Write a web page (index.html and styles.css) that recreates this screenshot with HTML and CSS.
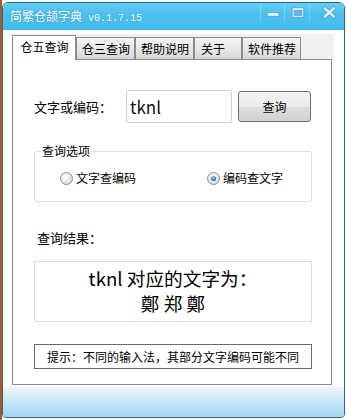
FILE: index.html
```html
<!DOCTYPE html>
<html lang="zh-CN">
<head>
    <meta charset="UTF-8">
    <meta name="viewport" content="width=device-width, initial-scale=1.0">
    <title>简繁仓颉字典</title>
    <link rel="stylesheet" href="styles.css">
</head>
<body>
    <div class="window">
        <div class="titlebar">
            <span class="title">简繁仓颉字典<span class="version">v0.1.7.15</span></span>
            <div class="controls">
                <span class="ctl ctl-min">
                    <svg width="24" height="19" viewBox="0 0 24 19">
                        <rect x="6.5" y="9.5" width="12" height="4" fill="#e2f2fb" stroke="#3f89b8" stroke-opacity="0.6"/>
                    </svg>
                </span>
                <span class="ctl ctl-max">
                    <svg width="25" height="19" viewBox="0 0 25 19">
                        <rect x="7.5" y="4.5" width="12" height="10" fill="#e2f2fb" stroke="#3f89b8" stroke-opacity="0.6"/>
                        <rect x="9.5" y="7.5" width="8" height="5" fill="#4cc1ee" stroke="#3f89b8" stroke-opacity="0.6"/>
                    </svg>
                </span>
                <span class="ctl ctl-close">
                    <svg width="33" height="19" viewBox="0 0 33 19">
                        <path d="M15.5 5.5 L24.5 13.5 M24.5 5.5 L15.5 13.5" stroke="#3f89b8" stroke-opacity="0.6" stroke-width="4.5" stroke-linecap="square"/>
                        <path d="M15.5 5.5 L24.5 13.5 M24.5 5.5 L15.5 13.5" stroke="#e2f2fb" stroke-width="2.6" stroke-linecap="square"/>
                    </svg>
                </span>
            </div>
        </div>

        <div class="client">
            <div class="tabs">
                <div class="tabstrip">
                    <span class="tab tab-active">仓五查询</span>
                    <span class="tab">仓三查询</span>
                    <span class="tab">帮助说明</span>
                    <span class="tab tab-about">关于</span>
                    <span class="tab">软件推荐</span>
                </div>

                <div class="page">
                    <div class="query-row">
                        <label class="field-label" for="code">文字或编码：</label>
                        <input id="code" class="code-input" type="text" value="tknl">
                        <button class="query-btn">查询</button>
                    </div>

                    <fieldset class="options">
                        <legend>查询选项</legend>
                        <div class="radio-row">
                            <label class="radio"><span class="radio-dot"></span>文字查编码</label>
                            <label class="radio"><span class="radio-dot checked"></span>编码查文字</label>
                        </div>
                    </fieldset>

                    <div class="result-label">查询结果：</div>
                    <div class="result-box">
                        <div>tknl 对应的文字为：</div>
                        <div>鄭 郑 鄭</div>
                    </div>

                    <div class="tip">提示：不同的输入法，其部分文字编码可能不同</div>
                </div>
            </div>
        </div>

        <div class="statusbar"></div>
    </div>
</body>
</html>
```

FILE: styles.css
```css
* {
    box-sizing: border-box;
}

body {
    margin: 0;
    background: linear-gradient(to right, #a35b2c 0 2px, #ffffff 2px);
    font-family: "Noto Sans CJK SC", "Noto Sans", sans-serif;
    font-size: 12px;
    color: #000;
}

.window {
    margin: 2px 0 0 2px;
    width: 343px;
    height: 416px;
    border: 1px solid #2b6690;
    border-radius: 6px 6px 4px 4px;
    overflow: hidden;
    display: flex;
    flex-direction: column;
    background: #fff;
}

/* title bar */
.titlebar {
    height: 27px;
    flex: none;
    display: flex;
    align-items: flex-start;
    background: linear-gradient(#66cff4, #4cc1ee 40%, #45bced);
    color: #fff;
}

.title {
    padding: 5px 0 0 7px;
    line-height: 16px;
    font-size: 12px;
    text-shadow: 0 0 2px rgba(0, 70, 120, 0.45);
}

.version {
    font-family: "Liberation Mono", monospace;
    font-size: 10px;
    margin-left: 6px;
}

.controls {
    margin-left: auto;
    margin-right: 2px;
    display: flex;
    height: 19px;
}

.ctl {
    display: flex;
    border-left: 1px solid rgba(255, 255, 255, 0.22);
}

.ctl-min { width: 24px; }
.ctl-max { width: 25px; }
.ctl-close { width: 33px; }

/* client */
.client {
    flex: 1;
    padding: 4px 0 0 9px;
}

.tabs {
    width: 322px;
}

.tabstrip {
    display: flex;
    align-items: flex-end;
    height: 25px;
    background: #f0f0f0;
}

.tab {
    height: 22px;
    padding: 0 4px 0 5px;
    border: 1px solid #898c95;
    border-bottom: 0;
    background: linear-gradient(#f4f4f4, #e7e7e7 50%, #d7d7d7);
    line-height: 21px;
    white-space: nowrap;
}

.tab-active {
    position: relative;
    width: 64px;
    height: 25px;
    margin-bottom: -1px;
    background: #fff;
    text-align: center;
    line-height: 22px;
}

.tab-about {
    width: 48px;
    padding-left: 6px;
}

.page {
    width: 320px;
    height: 326px;
    border: 1px solid #898c95;
    background: #fff;
    padding-left: 21px;
}

.query-row {
    display: flex;
    align-items: center;
    margin-top: 30px;
    height: 33px;
}

.field-label {
    width: 92px;
    font-size: 13px;
}

.code-input {
    width: 106px;
    height: 33px;
    border: 1px solid #c9d0d8;
    border-radius: 2px;
    padding: 0 0 0 3px;
    font-family: "Noto Sans CJK SC", "Noto Sans", sans-serif;
    font-size: 17px;
    color: #111;
    outline: none;
}

.query-btn {
    margin-left: 6px;
    width: 73px;
    height: 31px;
    border: 1px solid #707070;
    border-radius: 3px;
    background: linear-gradient(#f3f3f3, #ebebeb 50%, #dedede 50%, #d2d2d2);
    font-family: "Noto Sans CJK SC", "Noto Sans", sans-serif;
    font-size: 12px;
    color: #000;
    padding: 0;
}

.options {
    margin: 21px 0 0 0;
    width: 278px;
    border: 1px solid #d5dfe5;
    border-radius: 3px;
    padding: 13px 0 16px 0;
}

.options legend {
    margin-left: 6px;
    padding: 0 1px;
    font-size: 12px;
    line-height: 14px;
}

.radio-row {
    display: flex;
    padding-left: 25px;
    line-height: 14px;
}

.radio {
    display: flex;
    align-items: center;
    gap: 3px;
}

.radio:first-child {
    width: 147px;
}

.radio-dot {
    position: relative;
    width: 13px;
    height: 13px;
    border-radius: 50%;
    border: 1px solid #8e8f8f;
    background: radial-gradient(circle at 40% 35%, #ffffff, #e2e2e2 60%, #cfcfcf);
}

.radio-dot.checked::after {
    content: "";
    position: absolute;
    left: 3px;
    top: 3px;
    width: 5px;
    height: 5px;
    border-radius: 50%;
    background: radial-gradient(circle at 40% 35%, #8fd3ff, #2a7fd0 55%, #0d3e80);
}

.result-label {
    margin-top: 29px;
    padding-left: 3px;
    font-size: 13px;
    line-height: 14px;
}

.result-box {
    margin-top: 16px;
    width: 278px;
    border: 1px solid #dcdcdc;
    padding: 3px 0 6px;
    text-align: center;
    font-size: 18.67px;
    line-height: 25px;
}

.tip {
    margin-top: 22px;
    width: 278px;
    height: 25px;
    border: 1px solid #6b6b6b;
    text-align: center;
    line-height: 23px;
    font-size: 12px;
}

.statusbar {
    height: 30px;
    flex: none;
    background: linear-gradient(#eef7fc, #9ed6f2);
}
```
